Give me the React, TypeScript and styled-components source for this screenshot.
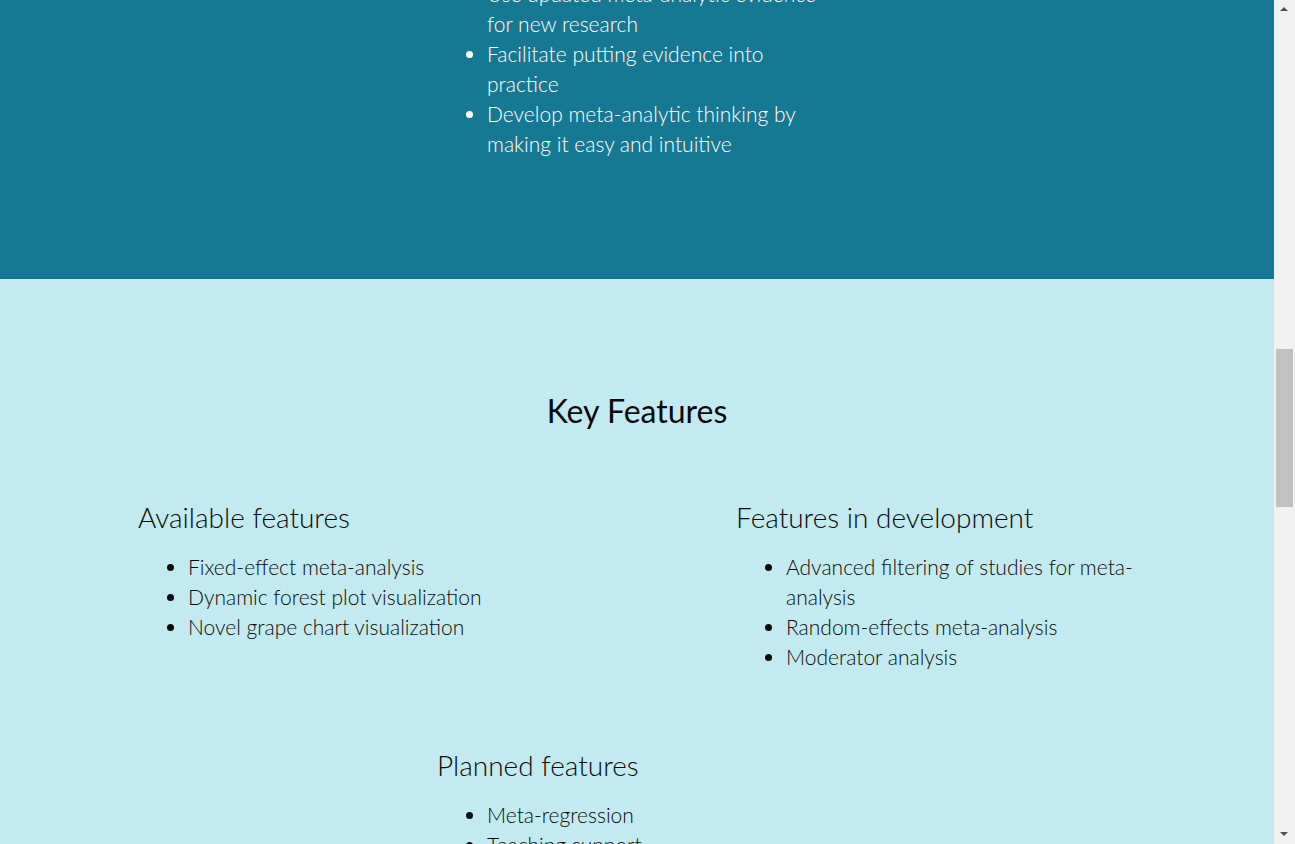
import { useLayoutEffect, useRef } from 'react';
import styled, { createGlobalStyle } from 'styled-components';

const GlobalStyle = createGlobalStyle`
  html {
    scrollbar-width: none;
  }
  html::-webkit-scrollbar {
    display: none;
  }
  body {
    margin: 0;
    font-family: 'Lato', 'Open Sans', sans-serif;
    font-weight: 300;
    color: #111;
  }
`;

const Page = styled.div`
  margin-right: 21px;
`;

const Hero = styled.header`
  min-height: 760px;
  background: #0f5f75;
  color: #fff;
  display: flex;
  flex-direction: column;
  align-items: center;
  justify-content: center;
  text-align: center;
`;

const HeroTitle = styled.h1`
  font-size: 56px;
  font-weight: 300;
  margin: 0 0 16px;
`;

const HeroText = styled.p`
  font-size: 22px;
  margin: 0;
`;

const Section = styled.section<{ $dark?: boolean }>`
  background: ${({ $dark }) => ($dark ? '#177893' : '#c4eaf1')};
  color: ${({ $dark }) => ($dark ? '#fff' : '#0a0a0a')};
  padding: 114px 0 120px;
`;

const SectionTitle = styled.h2`
  margin: 0;
  font-size: 32px;
  line-height: 36px;
  font-weight: 400;
  text-align: center;
`;

const Narrow = styled.div`
  width: 400px;
  margin: 0 auto;
`;

const Paragraph = styled.p`
  font-size: 21px;
  line-height: 30px;
  margin: 40px 0 0;
`;

const Columns = styled.div`
  width: 998px;
  margin: 74px auto 0;
  display: flex;
  justify-content: space-between;
`;

const Column = styled.div`
  width: 400px;
`;

const SubTitle = styled.h3<{ $gap?: number }>`
  margin: ${({ $gap }) => $gap ?? 0}px 0 0;
  font-size: 28px;
  line-height: 28px;
  font-weight: 300;
`;

const List = styled.ul`
  margin: 21px 0 0;
  padding-left: 50px;
  font-size: 21px;
  line-height: 30px;
`;

const Planned = styled.div`
  width: 400px;
  margin: 79px auto 0;
`;

const Footer = styled.footer`
  min-height: 1060px;
  background: #0f5f75;
  color: #fff;
  padding: 80px 0;
  text-align: center;
  font-size: 18px;
`;

const Scrollbar = styled.div`
  position: fixed;
  top: 0;
  right: 0;
  width: 21px;
  height: 100vh;
  background: #f1f1f1;
`;

const Arrow = styled.div<{ $down?: boolean }>`
  position: absolute;
  left: 6px;
  ${({ $down }) => ($down ? 'bottom: 8px;' : 'top: 7px;')}
  width: 0;
  height: 0;
  border-left: 4px solid transparent;
  border-right: 4px solid transparent;
  ${({ $down }) =>
    $down ? 'border-top: 4px solid #505050;' : 'border-bottom: 4px solid #505050;'}
`;

const Thumb = styled.div`
  position: absolute;
  left: 2px;
  top: 349px;
  width: 17px;
  height: 158px;
  background: #c1c1c1;
`;

export default function App() {
  const featuresRef = useRef<HTMLElement>(null);

  useLayoutEffect(() => {
    const el = featuresRef.current;
    if (el) window.scrollTo(0, el.offsetTop - 279);
  }, []);

  return (
    <>
      <GlobalStyle />
      <Page>
        <Hero>
          <HeroTitle>Interactive Meta-Analysis</HeroTitle>
          <HeroText>Synthesize research evidence in your browser</HeroText>
        </Hero>
        <Section $dark>
          <SectionTitle>About</SectionTitle>
          <Narrow>
            <Paragraph>
              An open tool for exploring, conducting and teaching meta-analysis with
              live, shareable datasets.
            </Paragraph>
            <SubTitle $gap={40}>Goals</SubTitle>
            <List>
              <li>Keep meta-analyses current as new studies appear</li>
              <li>Use updated meta-analytic evidence for new research</li>
              <li>Facilitate putting evidence into practice</li>
              <li>Develop meta-analytic thinking by making it easy and intuitive</li>
            </List>
          </Narrow>
        </Section>
        <Section ref={featuresRef}>
          <SectionTitle>Key Features</SectionTitle>
          <Columns>
            <Column>
              <SubTitle>Available features</SubTitle>
              <List>
                <li>Fixed-effect meta-analysis</li>
                <li>Dynamic forest plot visualization</li>
                <li>Novel grape chart visualization</li>
              </List>
            </Column>
            <Column>
              <SubTitle>Features in development</SubTitle>
              <List>
                <li>Advanced filtering of studies for meta-analysis</li>
                <li>Random-effects meta-analysis</li>
                <li>Moderator analysis</li>
              </List>
            </Column>
          </Columns>
          <Planned>
            <SubTitle>Planned features</SubTitle>
            <List>
              <li>Meta-regression</li>
              <li>Teaching support</li>
              <li>Collaborative dataset curation</li>
            </List>
          </Planned>
        </Section>
        <Footer>Open source project · Contributions welcome</Footer>
      </Page>
      <Scrollbar>
        <Arrow />
        <Thumb />
        <Arrow $down />
      </Scrollbar>
    </>
  );
}
